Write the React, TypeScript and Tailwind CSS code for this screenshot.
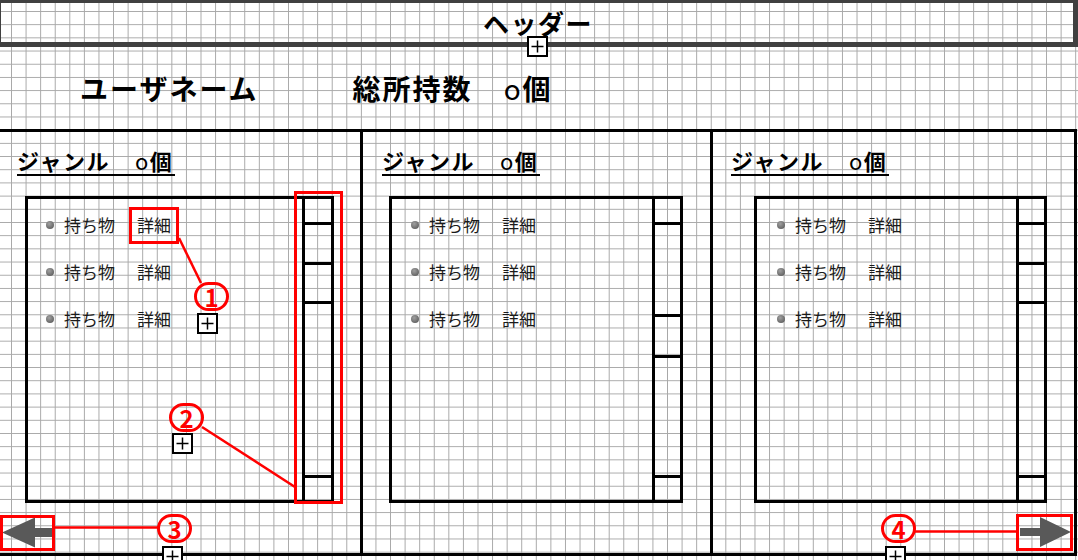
import type { ReactNode } from 'react';

type ColCfg = {
  headPl: string;
  boxMl: string;
  boxW: string;
  itemPl: string;
  barW: string;
  thumbMt: string;
  thumbH: string;
};

const cols: ColCfg[] = [
  { headPl: 'pl-[17px]', boxMl: 'ml-[25px]', boxW: 'w-[309px]', itemPl: 'pl-[18px]', barW: 'w-[29px]', thumbMt: 'mt-[37px]', thumbH: 'h-[42px]' },
  { headPl: 'pl-[19px]', boxMl: 'ml-[26px]', boxW: 'w-[294px]', itemPl: 'pl-[19px]', barW: 'w-[28px]', thumbMt: 'mt-[89px]', thumbH: 'h-[44px]' },
  { headPl: 'pl-[18px]', boxMl: 'ml-[41px]', boxW: 'w-[293px]', itemPl: 'pl-[20px]', barW: 'w-[28px]', thumbMt: 'mt-[37px]', thumbH: 'h-[42px]' },
];

function PlusBox({ className }: { className: string }) {
  return (
    <div className={`absolute h-[21px] w-[21px] border-2 border-black bg-white ${className}`}>
      <svg width="17" height="17" viewBox="0 0 17 17" className="block">
        <path d="M2.5 8.5h12M8.5 2.5v12" stroke="#000" strokeWidth="1.5" />
      </svg>
    </div>
  );
}

function Num({ n, className }: { n: string; className: string }) {
  return (
    <div className={`absolute flex h-[29px] w-[35px] items-center justify-center rounded-full border-[3px] border-[#ff0000] text-[24px] font-bold leading-none text-[#ff0000] ${className}`}>
      {n}
    </div>
  );
}

function LeftArrow() {
  return (
    <div className="relative mb-[2px] mt-auto h-[36px] w-[55px]">
      <svg width="55" height="36" viewBox="0 0 55 36" className="block">
        <path d="M2 17.5 35 2.5v10.5h18v9H35v10.5z" fill="#595959" />
      </svg>
      <div className="absolute inset-0 border-[3px] border-[#ff0000]" />
    </div>
  );
}

function RightArrow() {
  return (
    <div className="relative mb-[2px] mr-[1px] mt-auto h-[37px] w-[57px] self-end">
      <svg width="57" height="37" viewBox="0 0 57 37" className="block">
        <path d="M55 18 24 3v11H4v8h20v11z" fill="#595959" />
      </svg>
      <div className="absolute inset-0 border-[3px] border-[#ff0000]" />
    </div>
  );
}

function Column({ c, divider, arrow }: { c: ColCfg; divider?: boolean; arrow?: ReactNode }) {
  return (
    <div className={`flex flex-col ${divider ? 'border-l-[3px] border-black' : ''}`}>
      <div className={`mt-[17px] ${c.headPl}`}>
        <h2 className="inline-block border-b-2 border-black pb-[3px] pr-[2px] text-[22px] font-bold leading-none tracking-[1.5px] text-black">
          ジャンル<span className="ml-[25px] font-normal">o</span>個
        </h2>
      </div>
      <div className={`mt-[20px] flex h-[307px] border-[3px] border-black ${c.boxMl} ${c.boxW}`}>
        <ul className={`flex-1 pt-[2px] ${c.itemPl}`}>
          {[0, 1, 2].map((i) => (
            <li key={i} className="flex h-[47px] items-center text-[17px] leading-none text-[#1a1a1a]">
              <span className="mr-[10px] h-2 w-2 rounded-full bg-[radial-gradient(circle_at_40%_35%,#a0a0a0,#4f4f4f)]" />
              <span>持ち物</span>
              <span className="ml-[22px]">詳細</span>
            </li>
          ))}
        </ul>
        <div className={`flex flex-col border-l-[3px] border-black ${c.barW}`}>
          <div className="h-[26px] border-b-[3px] border-black" />
          <div className="flex-1">
            <div className={`border-y-[3px] border-black ${c.thumbMt} ${c.thumbH}`} />
          </div>
          <div className="h-[25px] border-t-[3px] border-black" />
        </div>
      </div>
      {arrow}
    </div>
  );
}

export default function App() {
  return (
    <div className="relative h-[560px] w-[1078px] overflow-hidden bg-white font-['Noto_Sans_CJK_JP','Noto_Sans',sans-serif] [background-image:linear-gradient(to_right,#a8a8a8_1px,transparent_1px),linear-gradient(to_bottom,#a8a8a8_1px,transparent_1px)] [background-position:11px_11px] [background-size:14.58px_13.2px]">
      <header className="flex h-[47px] items-center justify-center border-b-[5px] border-l border-r-[5px] border-t-[3px] border-[#404040]">
        <h1 className="pl-[2px] text-[26px] font-bold leading-none tracking-[1.5px] text-black">ヘッダー</h1>
      </header>

      <div className="flex h-[82px] items-center pl-[80px] text-[28px] font-bold leading-none tracking-[2px] text-black">
        <span>ユーザネーム</span>
        <span className="ml-[94px]">
          総所持数<span className="ml-[31px] font-normal">o</span>個
        </span>
      </div>

      <div className="grid h-[427px] w-[1077px] grid-cols-[360px_350px_1fr] border-y-[3px] border-r-[3px] border-black">
        <Column c={cols[0]} arrow={<LeftArrow />} />
        <Column c={cols[1]} divider />
        <Column c={cols[2]} divider arrow={<RightArrow />} />
      </div>

      {/* annotations */}
      <div className="absolute left-[129px] top-[207px] h-[37px] w-[50px] border-[3px] border-[#ff0000]" />
      <div className="absolute left-[294px] top-[191px] h-[313px] w-[49px] border-[3px] border-[#ff0000]" />
      <svg className="pointer-events-none absolute left-0 top-0" width="1078" height="560">
        <g stroke="#ff0000" strokeWidth="2.5">
          <line x1="179" y1="238" x2="201" y2="283" />
          <line x1="202" y1="427" x2="295" y2="487" />
          <line x1="55" y1="527.5" x2="158" y2="527.5" />
          <line x1="914" y1="531.5" x2="1017" y2="531.5" />
        </g>
      </svg>
      <Num n="1" className="left-[194px] top-[282px]" />
      <Num n="2" className="left-[169px] top-[403px]" />
      <Num n="3" className="left-[157px] top-[514px]" />
      <Num n="4" className="left-[881px] top-[514px]" />

      <PlusBox className="left-[527px] top-[36px]" />
      <PlusBox className="left-[197px] top-[313px]" />
      <PlusBox className="left-[172px] top-[433px]" />
      <PlusBox className="left-[162px] top-[546px]" />
      <PlusBox className="left-[885px] top-[546px]" />
    </div>
  );
}
